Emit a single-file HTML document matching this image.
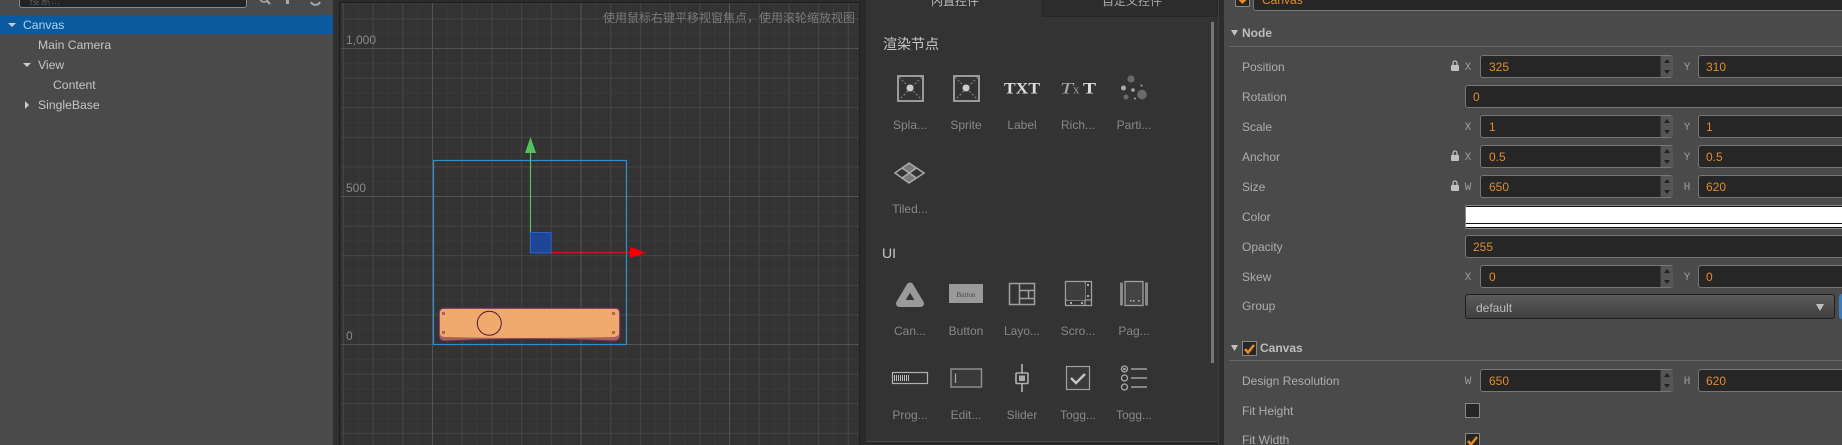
<!DOCTYPE html>
<html><head><meta charset="utf-8"><style>
html,body{margin:0;padding:0;background:#333}
#r{position:relative;width:1842px;height:445px;overflow:hidden;font:12px "Liberation Sans","Noto Sans CJK SC",sans-serif;color:#bbb}
#r div,#r svg{position:absolute}
.t{white-space:nowrap;line-height:20px;height:20px}
.l{left:1242px;color:#adadad;white-space:nowrap;line-height:20px;height:20px}
.i{background:#262626;border:1px solid #777;box-sizing:border-box;height:23px;border-radius:3px;color:#e08b2c;line-height:23px;white-space:nowrap}
.a{left:1480px;width:193px;padding-left:8px}
.b{left:1698px;width:160px;padding-left:7px}
.w{left:1465px;width:390px;padding-left:7px}
.s{left:1660px;width:13px;height:21px;background:#555;border-left:1px solid #3a3a3a;box-sizing:border-box}
.s:before{content:"";position:absolute;left:3px;top:3px;border:3px solid transparent;border-top:0;border-bottom:4px solid #222}
.s:after{content:"";position:absolute;left:3px;bottom:3px;border:3px solid transparent;border-bottom:0;border-top:4px solid #222}
.m{font:11px "Liberation Mono",monospace;color:#9c9c9c;line-height:20px;height:20px;width:12px;text-align:center}
.g{color:#888;line-height:20px;height:20px;width:56px;text-align:center;white-space:nowrap}
</style></head><body><div id="r">

<!-- Hierarchy -->
<div style="left:0;top:0;width:333px;height:445px;background:#4a4a4a"></div>
<div style="left:19px;top:-12px;width:228px;height:20px;background:#232323;border:1px solid #888;border-radius:3px;box-sizing:border-box"></div>
<div class="t" style="left:29px;top:-9px;color:#555;font-size:11px">搜索...</div>
<svg style="left:255px;top:0" width="70" height="6"><circle cx="9" cy="-2" r="4" fill="none" stroke="#aaa" stroke-width="1.5"/><path d="M12 1l3 3" stroke="#aaa" stroke-width="2"/><rect x="31" y="0" width="3" height="4" fill="#aaa"/><path d="M56 2a5 5 0 0 0 9 0" stroke="#aaa" stroke-width="2" fill="none"/></svg>
<div style="left:0;top:15px;width:333px;height:19px;background:#0b5aa0"></div>
<svg style="left:0;top:0" width="40" height="110"><path d="M8 23h8l-4 4zM23 63h8l-4 4zM25 101v8l4-4z" fill="#ccc"/></svg>
<div class="t" style="left:23px;top:15px;color:#a9d3f2;font-size:12.2px">Canvas</div>
<div class="t" style="left:38px;top:35px;color:#c4c4c4;font-size:12.2px">Main Camera</div>
<div class="t" style="left:38px;top:55px;color:#c4c4c4;font-size:12.2px">View</div>
<div class="t" style="left:53px;top:75px;color:#c4c4c4;font-size:12.2px">Content</div>
<div class="t" style="left:38px;top:95px;color:#c4c4c4;font-size:12.2px">SingleBase</div>

<!-- gutter -->
<div style="left:333px;top:0;width:6px;height:445px;background:#2f2f2f"></div>

<!-- Scene -->
<svg style="left:339px;top:0" width="527" height="445" viewBox="339 0 527 445">
<defs>
<pattern id="p1" x="432" y="48" width="14.85" height="14.8" patternUnits="userSpaceOnUse"><path d="M.5 0V14.8M0 .5H14.85" stroke="#393939" fill="none"/></pattern>
<pattern id="p2" x="432" y="48" width="29.7" height="29.6" patternUnits="userSpaceOnUse"><path d="M.5 0V29.6M0 .5H29.7" stroke="#444" fill="none"/></pattern>
<pattern id="p3" x="432" y="48" width="148.5" height="148" patternUnits="userSpaceOnUse"><path d="M.5 0V148M0 .5H148.5" stroke="#535353" fill="none"/></pattern>
</defs>
<rect x="339" y="0" width="527" height="445" fill="#2b2b2b"/>
<rect x="341" y="3" width="518" height="442" fill="#333"/>
<rect x="341" y="3" width="518" height="442" fill="url(#p1)"/>
<rect x="341" y="3" width="518" height="442" fill="url(#p2)"/>
<rect x="341" y="3" width="518" height="442" fill="url(#p3)"/>
<rect x="339.5" y="2.5" width="520" height="450" fill="none" stroke="#1f1f1f"/>
<rect x="433.5" y="160.5" width="193" height="184" fill="none" stroke="#2e8fd0" stroke-width="1.2"/>
<!-- wood -->
<path d="M444 308H615Q620 308 620 313V335Q620 341 614 341Q530 337 444 341Q439 341 439 335V313Q439 308 444 308Z" fill="#a8605f" stroke="#5e2a60" stroke-width="1"/>
<path d="M444 309H615Q619 309 619 313V333Q619 337 612 337Q530 339 446 337Q440 337 440 333V313Q440 309 444 309Z" fill="#f0aa6e"/>
<rect x="442" y="312" width="3" height="3" fill="#a96a4c"/><rect x="442" y="331" width="3" height="3" fill="#a96a4c"/><rect x="612" y="312" width="3" height="3" fill="#a96a4c"/><rect x="612" y="331" width="3" height="3" fill="#a96a4c"/>
<circle cx="489.3" cy="323.3" r="12" fill="none" stroke="#4c1742" stroke-width="1"/>
<!-- gizmo -->
<path d="M530.5 153V253" stroke="#52c35a" stroke-width="1.2"/>
<path d="M530.5 137L536 153H525Z" fill="#52c35a"/>
<rect x="530.5" y="232.5" width="20.5" height="20.5" fill="#1f4696" stroke="#2860c8"/>
<path d="M551 252.7H632" stroke="#e41616" stroke-width="1.2"/>
<path d="M630 247L646 252.7L630 258Z" fill="#f00000"/>
<text x="346" y="44" font-family="Liberation Sans" font-size="12" fill="#8a8a8a">1,000</text>
<text x="346" y="192" font-family="Liberation Sans" font-size="12" fill="#8a8a8a">500</text>
<text x="346" y="340" font-family="Liberation Sans" font-size="12" fill="#8a8a8a">0</text>
<text x="603" y="22" font-family="Liberation Sans,Noto Sans CJK SC" font-size="12" fill="#7b7b7b">使用鼠标右键平移视窗焦点&#xFF0C;使用滚轮缩放视图</text>
</svg>

<!-- Widget panel -->
<div style="left:860px;top:0;width:6px;height:445px;background:#2a2a2a"></div>
<div style="left:866px;top:0;width:352px;height:441px;background:#333"></div>
<div style="left:866px;top:441px;width:352px;height:4px;background:#2a2a2a;border-top:1px solid #4a4a4a;box-sizing:border-box"></div>
<div style="left:1042px;top:-2px;width:176px;height:19px;background:#2d2d2d;border:1px solid #262626;box-sizing:border-box"></div>
<div class="t" style="left:925px;top:-9px;width:60px;text-align:center;color:#bbb;font-size:12px">内置控件</div>
<div class="t" style="left:1092px;top:-9px;width:80px;text-align:center;color:#aaa;font-size:12px">自定义控件</div>
<div style="left:1211px;top:22px;width:3px;height:341px;background:#777"></div>
<div class="t" style="left:883px;top:34px;font-size:14px;color:#c8c8c8">渲染节点</div>
<div class="t" style="left:882px;top:243px;font-size:14px;color:#c8c8c8">UI</div>

<svg style="left:866px;top:60px" width="340" height="345" viewBox="866 60 340 345">
<g fill="none" stroke="#9a9a9a">
<rect x="898" y="76" width="25" height="25" stroke-width="2"/><path d="M899 77l23 23M922 77l-23 23" stroke="#8a8a8a" stroke-dasharray="2 2"/>
<rect x="954" y="76" width="25" height="25" stroke-width="2"/><path d="M955 77l23 23M978 77l-23 23" stroke="#8a8a8a" stroke-dasharray="2 2"/>
</g>
<circle cx="910" cy="88" r="3.5" fill="#ccc"/><circle cx="966" cy="88" r="3.5" fill="#ccc"/>
<text x="1004" y="93.500" font-family="Liberation Serif" font-weight="bold" font-size="16" fill="#ddd" textLength="36" lengthAdjust="spacingAndGlyphs">TXT</text>
<text x="1060" y="93.500" font-family="Liberation Serif" font-style="italic" font-size="16" fill="#aaa" textLength="13" lengthAdjust="spacingAndGlyphs">T</text>
<text x="1073" y="93.500" font-family="Liberation Serif" font-size="13" fill="#999">x</text>
<text x="1083" y="93.500" font-family="Liberation Serif" font-weight="bold" font-size="16" fill="#ddd" textLength="13" lengthAdjust="spacingAndGlyphs">T</text>
<g fill="#6a6a6a"><circle cx="1131" cy="79" r="3.6"/><circle cx="1142" cy="94.500" r="4.800"/><circle cx="1126" cy="97" r="2.500"/></g>
<g fill="#aaa"><circle cx="1123.500" cy="88" r="2.500"/><circle cx="1133" cy="90" r="1.800"/><circle cx="1141.500" cy="85.500" r="1"/><circle cx="1135" cy="98.500" r="1"/></g>
<path d="M909 163L916.500 168L909.500 173L902 168ZM909.500 173L916.500 178L909 183L902 178Z" fill="#7a7a7a"/>
<path d="M909 163L924 173L909 183L895 173ZM902 168L916.500 178M916.500 168L902 178" fill="none" stroke="#aaa" stroke-width="1.500"/>
<!-- UI row 1 -->
<path d="M910 286L920.500 303.500H899.500Z" fill="none" stroke="#9a9a9a" stroke-width="7" stroke-linejoin="round"/>
<rect x="949" y="284" width="34" height="19" fill="#9a9a9a"/>
<text x="966" y="297" font-family="Liberation Serif" font-size="7" fill="#444" text-anchor="middle">Button</text>
<g fill="none" stroke="#a0a0a0" stroke-width="1.500"><rect x="1009.500" y="283.500" width="25" height="21"/><path d="M1019.500 283.500V304.500M1019.500 290.500H1034.500M1019.500 298.500H1034.500M1028.500 290.500V298.500"/></g>
<g fill="none" stroke="#a0a0a0" stroke-width="1.300"><rect x="1065.500" y="281.500" width="26" height="24"/><path d="M1085 281.500V305.500M1065.500 300H1091.500"/></g>
<rect x="1067" y="283" width="18" height="17" fill="#3e3e3e"/>
<g fill="#aaa"><rect x="1087" y="284" width="2" height="2"/><rect x="1087" y="295" width="2" height="2"/><rect x="1070" y="302" width="2" height="2"/><rect x="1081" y="302" width="2" height="2"/></g>
<rect x="1125" y="281.500" width="18" height="24" fill="#444" stroke="#a0a0a0" stroke-width="1.300"/>
<path d="M1121.500 282.500V305.500M1146.500 282.500V305.500" stroke="#888" stroke-width="3"/>
<g fill="#aaa"><rect x="1130" y="300" width="1.600" height="1.600"/><rect x="1133" y="300" width="1.600" height="1.600"/><rect x="1138" y="300" width="1.600" height="1.600"/></g>
<!-- UI row 2 -->
<rect x="892.500" y="372.500" width="35" height="11" fill="#333" stroke="#b0b0b0" stroke-width="1.200"/>
<path d="M894.500 375v6M896.500 375v6M898.500 375v6M900.500 375v6M902.500 375v6M904.500 375v6M906.500 375v6M908.500 375v6" stroke="#bbb"/>
<rect x="951" y="369" width="30.500" height="18" fill="#3a3a3a" stroke="#8d8d8d" stroke-width="1.500"/>
<path d="M955.500 373.500V383" stroke="#aaa" stroke-width="1.200"/>
<path d="M1022 364V392" stroke="#9a9a9a" stroke-width="2"/>
<rect x="1016" y="373" width="12" height="10.500" rx="1" fill="#333" stroke="#b0b0b0" stroke-width="1.600"/>
<rect x="1019" y="375.500" width="6" height="5.500" fill="#aaa"/>
<rect x="1066.500" y="366.500" width="23" height="23" fill="#3a3a3a" stroke="#a0a0a0" stroke-width="1.200"/>
<path d="M1071 378L1076 383L1085 374" fill="none" stroke="#c4c4c4" stroke-width="2.400"/>
<g fill="none" stroke="#a8a8a8" stroke-width="1.300"><circle cx="1124.500" cy="369" r="3"/><circle cx="1124.500" cy="378" r="3"/><circle cx="1124.500" cy="387" r="3"/></g>
<circle cx="1124.500" cy="369" r="1.300" fill="#aaa"/>
<path d="M1131 369H1147M1131 378H1147M1131 387H1147" stroke="#a0a0a0" stroke-width="1.500"/>
</svg>

<div class="g" style="left:882px;top:115px">Spla...</div>
<div class="g" style="left:938px;top:115px">Sprite</div>
<div class="g" style="left:994px;top:115px">Label</div>
<div class="g" style="left:1050px;top:115px">Rich...</div>
<div class="g" style="left:1106px;top:115px">Parti...</div>
<div class="g" style="left:882px;top:199px">Tiled...</div>
<div class="g" style="left:882px;top:321px">Can...</div>
<div class="g" style="left:938px;top:321px">Button</div>
<div class="g" style="left:994px;top:321px">Layo...</div>
<div class="g" style="left:1050px;top:321px">Scro...</div>
<div class="g" style="left:1106px;top:321px">Pag...</div>
<div class="g" style="left:882px;top:405px">Prog...</div>
<div class="g" style="left:938px;top:405px">Edit...</div>
<div class="g" style="left:994px;top:405px">Slider</div>
<div class="g" style="left:1050px;top:405px">Togg...</div>
<div class="g" style="left:1106px;top:405px">Togg...</div>

<!-- gutter 2 -->
<div style="left:1218px;top:0;width:6px;height:445px;background:#2c2c2c;border-left:1px solid #3e3e3e;box-sizing:border-box"></div>

<!-- Inspector -->
<div style="left:1224px;top:0;width:618px;height:445px;background:#4a4a4a"></div>
<div style="left:1235px;top:-8px;width:15px;height:15px;background:#262626;border:1px solid #888;box-sizing:border-box;border-radius:1px"></div>
<svg style="left:1235px;top:0" width="15" height="7"><path d="M3.500 0h8l-4 4z" fill="#e8882a"/></svg>
<div class="i" style="left:1253px;top:-12px;width:600px;height:23px;padding-left:8px">Canvas</div>

<svg style="left:1229px;top:0" width="20" height="360"><path d="M2 30h7l-3.500 6zM2 345h7l-3.500 6z" fill="#c0c0c0"/></svg>
<div class="t" style="left:1242px;top:23px;font-weight:bold;color:#bdbdbd">Node</div>
<div style="left:1229px;top:46px;width:613px;height:1px;background:#646464"></div>

<div class="l" style="top:57px">Position</div>
<div class="l" style="top:87px">Rotation</div>
<div class="l" style="top:117px">Scale</div>
<div class="l" style="top:147px">Anchor</div>
<div class="l" style="top:177px">Size</div>
<div class="l" style="top:207px">Color</div>
<div class="l" style="top:237px">Opacity</div>
<div class="l" style="top:267px">Skew</div>
<div class="l" style="top:296px">Group</div>

<svg style="left:1450px;top:0" width="12" height="200"><g fill="#c0c0c0"><rect x="1" y="65" width="8" height="6" rx="1"/><path d="M3 65v-2a2 2 0 0 1 4 0v2" fill="none" stroke="#c0c0c0" stroke-width="1.300"/><rect x="1" y="155" width="8" height="6" rx="1"/><path d="M3 155v-2a2 2 0 0 1 4 0v2" fill="none" stroke="#c0c0c0" stroke-width="1.300"/><rect x="1" y="185" width="8" height="6" rx="1"/><path d="M3 185v-2a2 2 0 0 1 4 0v2" fill="none" stroke="#c0c0c0" stroke-width="1.300"/></g></svg>

<div class="m" style="left:1462px;top:58px">X</div><div class="m" style="left:1681px;top:58px">Y</div>
<div class="m" style="left:1462px;top:118px">X</div><div class="m" style="left:1681px;top:118px">Y</div>
<div class="m" style="left:1462px;top:148px">X</div><div class="m" style="left:1681px;top:148px">Y</div>
<div class="m" style="left:1462px;top:178px">W</div><div class="m" style="left:1681px;top:178px">H</div>
<div class="m" style="left:1462px;top:268px">X</div><div class="m" style="left:1681px;top:268px">Y</div>

<div class="i a" style="top:55px">325</div><div class="s" style="top:56px"></div><div class="i b" style="top:55px">310</div>
<div class="i w" style="top:85px">0</div>
<div class="i a" style="top:115px">1</div><div class="s" style="top:116px"></div><div class="i b" style="top:115px">1</div>
<div class="i a" style="top:145px">0.5</div><div class="s" style="top:146px"></div><div class="i b" style="top:145px">0.5</div>
<div class="i a" style="top:175px">650</div><div class="s" style="top:176px"></div><div class="i b" style="top:175px">620</div>

<div style="left:1465px;top:205px;width:390px;height:24px;background:#fff;border:1px solid #8a8a8a;box-sizing:border-box;border-radius:2px"></div>
<div style="left:1466px;top:206px;width:380px;height:1px;background:#111"></div>
<div style="left:1466px;top:223px;width:380px;height:1px;background:#111"></div>
<div style="left:1466px;top:227px;width:380px;height:1px;background:#111"></div>

<div class="i w" style="top:235px">255</div>
<div class="i a" style="top:265px">0</div><div class="s" style="top:266px"></div><div class="i b" style="top:265px">0</div>

<div style="left:1465px;top:294px;width:370px;height:25px;background:linear-gradient(#5a5a5a,#404040);border:1px solid #1e1e1e;border-radius:3px;box-sizing:border-box"></div>
<div class="t" style="left:1476px;top:298px;color:#bdbdbd">default</div>
<svg style="left:1813px;top:303px" width="14" height="10"><path d="M3 1h8l-4 7z" fill="#c0c0c0"/></svg>
<div style="left:1839px;top:294px;width:8px;height:25px;background:#3f7cb8;border-radius:3px"></div>

<div style="left:1242px;top:341px;width:15px;height:15px;background:#262626;border:1px solid #888;box-sizing:border-box"></div>
<svg style="left:1242px;top:341px" width="15" height="15"><path d="M3 8l3 3.500L12 4" fill="none" stroke="#ec8a22" stroke-width="2.500"/></svg>
<div class="t" style="left:1260px;top:338px;font-weight:bold;color:#bdbdbd">Canvas</div>
<div style="left:1229px;top:360px;width:613px;height:1px;background:#646464"></div>

<div class="l" style="top:371px">Design Resolution</div>
<div class="l" style="top:401px">Fit Height</div>
<div class="l" style="top:430px">Fit Width</div>
<div class="m" style="left:1462px;top:372px">W</div><div class="m" style="left:1681px;top:372px">H</div>
<div class="i a" style="top:369px">650</div><div class="s" style="top:370px"></div><div class="i b" style="top:369px">620</div>

<div style="left:1465px;top:403px;width:15px;height:15px;background:#262626;border:1px solid #888;box-sizing:border-box"></div>
<div style="left:1465px;top:433px;width:15px;height:15px;background:#262626;border:1px solid #888;box-sizing:border-box"></div>
<svg style="left:1465px;top:433px" width="15" height="15"><path d="M3 8l3 3.500L12 4" fill="none" stroke="#ec8a22" stroke-width="2.500"/></svg>
</div></body></html>
